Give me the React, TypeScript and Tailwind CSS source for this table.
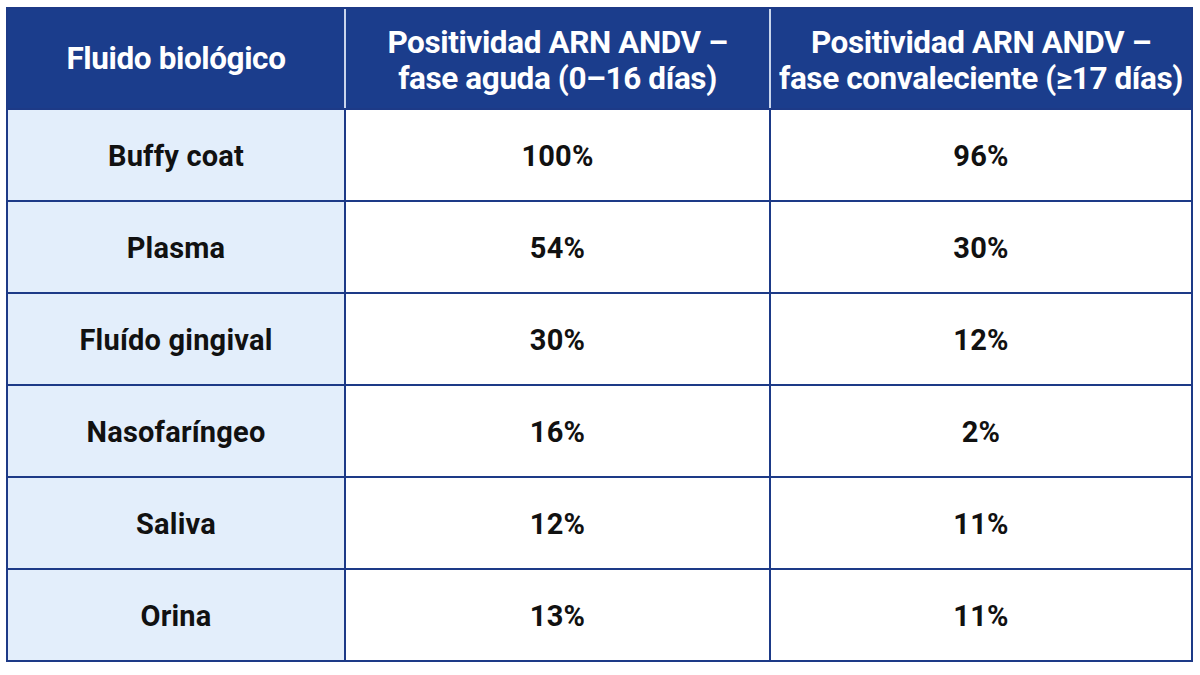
const rows = [
  { fluid: 'Buffy coat', acute: '100%', conv: '96%' },
  { fluid: 'Plasma', acute: '54%', conv: '30%' },
  { fluid: 'Fluído gingival', acute: '30%', conv: '12%' },
  { fluid: 'Nasofaríngeo', acute: '16%', conv: '2%' },
  { fluid: 'Saliva', acute: '12%', conv: '11%' },
  { fluid: 'Orina', acute: '13%', conv: '11%' },
];

export default function App() {
  return (
    <div className="w-[1200px] h-[675px] bg-white pl-[6px] pt-[7px] font-['Roboto',sans-serif]">
      <div className="w-[1187px] border-2 border-[#1d3a87]">
        {/* Header */}
        <div className="grid grid-cols-[336px_425px_422px] h-[99px] bg-[#1b3d8c] text-white font-bold text-[31.5px] leading-[36px] tracking-[-0.4px]">
          <div className="flex items-center justify-center text-center">Fluido biológico</div>
          <div className="flex items-center justify-center text-center pt-[4px] border-l-2 border-[#c9d5ec]">
            Positividad ARN ANDV –<br />fase aguda (0–16 días)
          </div>
          <div className="flex items-center justify-center text-center pt-[4px] border-l-2 border-[#c9d5ec]">
            Positividad ARN ANDV –<br />fase convaleciente (≥17 días)
          </div>
        </div>

        {/* Body */}
        {rows.map((r) => (
          <div
            key={r.fluid}
            className="grid grid-cols-[336px_425px_422px] h-[92px] border-t-2 border-[#1d3a87] text-[29px] font-bold text-[#111] tracking-[0.2px]"
          >
            <div className="flex items-center justify-center pt-[3px] bg-[#e3eefb]">{r.fluid}</div>
            <div className="flex items-center justify-center pt-[3px] border-l-2 border-[#1d3a87]">{r.acute}</div>
            <div className="flex items-center justify-center pt-[3px] border-l-2 border-[#1d3a87]">{r.conv}</div>
          </div>
        ))}
      </div>
    </div>
  );
}
